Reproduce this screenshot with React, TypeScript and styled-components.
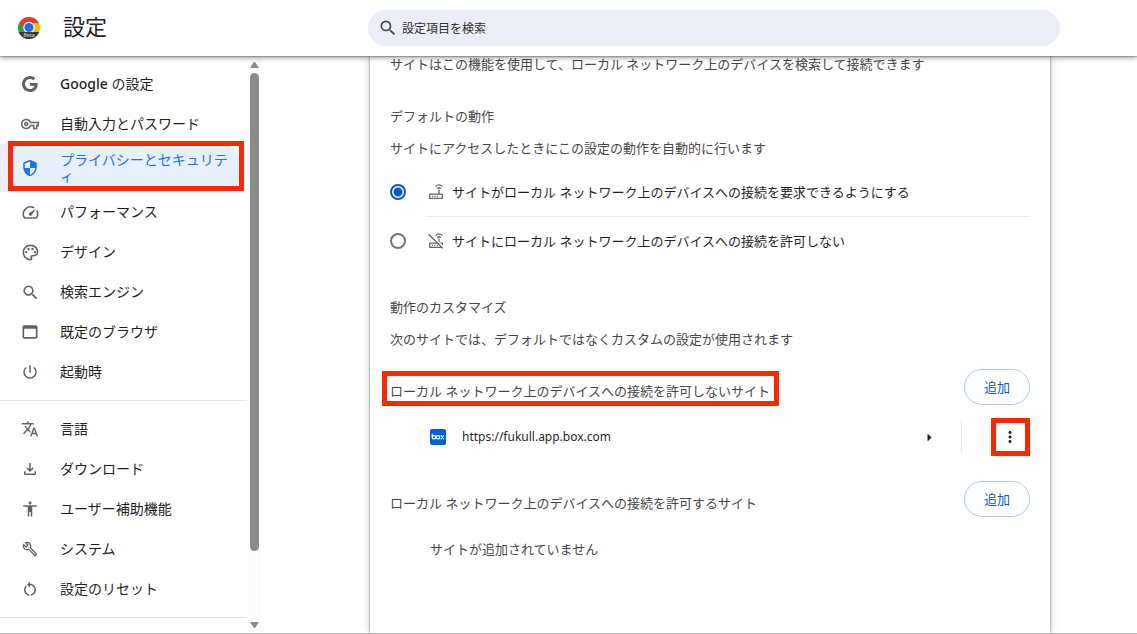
import React from 'react';
import styled, { createGlobalStyle } from 'styled-components';
import {
  MdAccessibility,
  MdMoreVert,
  MdOutlineBuild,
  MdOutlineFileDownload,
  MdOutlinePalette,
  MdOutlineVpnKey,
  MdPowerSettingsNew,
  MdRestartAlt,
  MdSearch,
  MdSecurity,
  MdSpeed,
  MdTranslate,
  MdWebAsset,
} from 'react-icons/md';

const GlobalStyle = createGlobalStyle`
  *, *::before, *::after { box-sizing: border-box; }
  body {
    margin: 0;
    background: #fff;
    color: #1f1f1f;
    font-family: "Noto Sans", "Noto Sans CJK JP", sans-serif;
    font-size: 13px;
    line-height: 20px;
  }
  button, input { font: inherit; }
`;

const Page = styled.div`
  display: flex;
  flex-direction: column;
  height: 100vh;
  overflow: hidden;
  border-bottom: 1px solid #b0b0b0;
`;

const Toolbar = styled.header`
  position: relative;
  z-index: 2;
  flex: none;
  display: flex;
  align-items: center;
  height: 56px;
  background: #fff;
  box-shadow: 0 1px 1px rgba(0, 0, 0, 0.2), 0 2px 5px rgba(0, 0, 0, 0.36);
`;

const Brand = styled.div`
  flex: none;
  display: flex;
  align-items: center;
  gap: 22px;
  width: 291px;
  padding-left: 17px;
`;

const Title = styled.h1`
  margin: 0;
  padding-bottom: 4px;
  font-size: 22px;
  line-height: 28px;
  font-weight: 400;
`;

const SearchArea = styled.div`
  flex: 1;
  display: flex;
  justify-content: center;
`;

const SearchBox = styled.label`
  display: flex;
  align-items: center;
  gap: 4px;
  width: 100%;
  max-width: 692px;
  height: 36px;
  padding: 0 10px;
  border-radius: 18px;
  background: #ebeef8;
  color: #474747;
`;

const SearchInput = styled.input`
  flex: 1;
  min-width: 0;
  padding: 2px 0 0;
  border: 0;
  outline: 0;
  background: transparent;
  font-size: 12px;
  &::placeholder { color: #303030; opacity: 1; }
`;

const Body = styled.div`
  flex: 1;
  min-height: 0;
  display: flex;
`;

const Sidebar = styled.aside`
  flex: none;
  display: flex;
  width: 283px;
`;

const Nav = styled.nav`
  width: 247px;
  padding-top: 8px;
`;

const NavLink = styled.a<{ $active?: boolean }>`
  position: relative;
  display: flex;
  align-items: center;
  gap: 20px;
  min-height: 40px;
  margin-right: 4px;
  padding: 8px 14px 8px 20px;
  border-radius: 0 24px 24px 0;
  background: ${(p) => (p.$active ? '#e8f0fe' : 'transparent')};
  color: ${(p) => (p.$active ? '#1a73e8' : '#1f1f1f')};
  font-size: 14px;
  line-height: 16px;
  font-weight: 400;
  text-decoration: none;
`;

const NavIcon = styled.span<{ $active?: boolean }>`
  flex: none;
  display: flex;
  justify-content: center;
  width: 20px;
  color: ${(p) => (p.$active ? '#1a73e8' : '#5f6368')};
`;

const Brandname = styled.span`
  font-weight: 500;
`;

const Divider = styled.hr`
  height: 1px;
  margin: 8px 0;
  border: 0;
  background: #e4e4e4;
`;

const ScrollTrack = styled.div`
  display: flex;
  flex-direction: column;
  align-items: center;
  justify-content: space-between;
  width: 15px;
  padding: 4px 0 3px;
  background: #fcfcfc;
`;

const ScrollThumb = styled.div`
  flex: 1;
  display: flex;
  padding: 4px 0 70px;
  &::before {
    content: '';
    width: 9px;
    border-radius: 5px;
    background: #8b8b8b;
  }
`;

const Main = styled.main`
  flex: 1;
  min-width: 0;
  display: flex;
  justify-content: center;
`;

const Card = styled.section`
  width: 100%;
  max-width: 680px;
  padding: 0 20px;
  background: #fff;
  box-shadow: 0 0 2px rgba(0, 0, 0, 0.5), 0 0 8px rgba(0, 0, 0, 0.22);
`;

const Intro = styled.p`
  margin: 0 0 34px;
  line-height: 16px;
  color: #474747;
`;

const SectionTitle = styled.h2`
  margin: 0 0 12px;
  font-size: 13px;
  font-weight: 400;
  color: #474747;
`;

const SectionText = styled.p`
  margin: 0;
  color: #474747;
`;

const Choices = styled.div`
  margin: 10px 0 32px;
`;

const Choice = styled.label`
  display: flex;
  align-items: center;
  height: 48px;
`;

const ChoiceDivider = styled.hr`
  height: 1px;
  margin: 0 0 0 36px;
  border: 0;
  background: #ececec;
`;

const Radio = styled.input`
  appearance: none;
  flex: none;
  width: 16px;
  height: 16px;
  margin: 0;
  border: 2px solid #757575;
  border-radius: 50%;
  &:checked {
    border-color: #0b57d0;
    background: radial-gradient(circle, #0b57d0 4px, transparent 5px);
  }
`;

const ChoiceBody = styled.span`
  flex: 1;
  display: flex;
  align-items: center;
  gap: 8px;
  margin-left: 22px;
  svg { color: #5f6368; }
`;

const ListHeader = styled.div`
  display: flex;
  align-items: flex-end;
  justify-content: space-between;
  margin-top: 20px;
`;

const ListTitle = styled.h3`
  position: relative;
  margin: 0 0 4px;
  font-size: 13px;
  font-weight: 400;
  color: #474747;
`;

const AddButton = styled.button`
  width: 66px;
  height: 36px;
  padding: 0;
  border: 1px solid #a8c7fa;
  border-radius: 18px;
  background: #fff;
  color: #0b57d0;
`;

const SiteRow = styled.div`
  display: flex;
  align-items: center;
  height: 48px;
  margin-top: 8px;
  padding: 0 2px 0 40px;
`;

const SiteName = styled.span`
  flex: 1;
  margin-left: 16px;
  font-size: 12px;
`;

const IconButton = styled.button`
  position: relative;
  display: flex;
  align-items: center;
  justify-content: center;
  width: 36px;
  height: 36px;
  padding: 0;
  border: 0;
  background: transparent;
  color: #1f1f1f;
`;

const Separator = styled.span`
  width: 1px;
  height: 32px;
  margin: 0 30px 0 14px;
  background: #e4e4e4;
`;

const EmptyList = styled.p`
  margin: 8px 0 0;
  padding-left: 40px;
  line-height: 48px;
  color: #474747;
`;

const Highlight = styled.span<{ $inset: string }>`
  position: absolute;
  z-index: 1;
  inset: ${(p) => p.$inset};
  border: 5px solid #ff2600;
  pointer-events: none;
`;

const ChromeLogo = () => (
  <svg width="24" height="24" viewBox="0 0 24 24" aria-hidden="true">
    <defs>
      <clipPath id="disc"><circle cx="12" cy="12" r="11" /></clipPath>
    </defs>
    <g clipPath="url(#disc)">
      <rect width="24" height="24" fill="#fbbc04" />
      <path d="M0 0h24v7H12L7.500 14.500 1 5z" fill="#e33b2e" />
      <path d="M2.300 6.200 7.600 14.600 12 17v7H0V6z" fill="#2da04a" />
      <circle cx="12" cy="11.500" r="5.700" fill="#fff" />
      <circle cx="12" cy="11.500" r="4.600" fill="#1a73e8" />
      <rect y="16" width="24" height="8" fill="#35363a" />
    </g>
    <text x="12" y="21" textAnchor="middle" fontSize="5" fontWeight="600" fill="#c8c8c8">Beta</text>
  </svg>
);

const GoogleG = () => (
  <svg width="18" height="18" viewBox="0 0 18 18" fill="currentColor" aria-hidden="true">
    <path d="M16.58 8H9v2.75h4.47c-.24 1.200-1.420 3.270-4.470 3.270-2.720 0-4.930-2.250-4.930-5.020S6.280 3.980 9 3.980c1.540 0 2.570.66 3.170 1.220l2.190-2.120C12.970 1.790 11.160 1 9 1 4.580 1 1 4.580 1 9s3.580 8 8 8c4.620 0 7.680-3.250 7.680-7.820 0-.46-.04-.83-.1-1.180z" />
  </svg>
);

const Router = ({ off = false }: { off?: boolean }) => (
  <svg width="16" height="16" viewBox="0 0 16 16" fill="none" stroke="currentColor" strokeWidth="1.300" aria-hidden="true">
    <rect x="1.650" y="10.150" width="12.700" height="4.200" rx="0.600" />
    <path d="M11 5.500V10M7.600 2.600Q11-.8 14.400 2.600M9.200 4.500Q11 3 12.800 4.500" />
    <path d="M3.800 12.300h1.300M6.300 12.300h1.300M8.800 12.300h1.300" />
    {off && (
      <>
        <path d="M1.500.2 15.800 14.500" stroke="#fff" strokeWidth="1.400" />
        <path d="M.6 1.200 14.800 15.400" />
      </>
    )}
  </svg>
);

const BoxFavicon = () => (
  <svg width="16" height="16" viewBox="0 0 16 16" aria-hidden="true">
    <rect width="16" height="16" rx="2" fill="#0061d5" />
    <g fill="none" stroke="#fff" strokeWidth="1.100" strokeLinecap="round">
      <path d="M2.200 5v3.500" />
      <circle cx="4" cy="8.300" r="1.700" />
      <circle cx="8" cy="8.300" r="1.700" />
      <path d="m11 6.700 2.700 3.300M13.700 6.700 11 10" />
    </g>
  </svg>
);

const Triangle = ({ d }: { d: string }) => (
  <svg width="9" height="9" viewBox="0 0 9 9" aria-hidden="true">
    <path d={d} fill="currentColor" stroke="currentColor" strokeLinejoin="round" />
  </svg>
);

const ScrollArrow = styled.span`
  display: flex;
  color: #8b8b8b;
`;

interface Entry {
  label: React.ReactNode;
  icon: React.ReactNode;
  active?: boolean;
}

const primary: Entry[] = [
  { label: <><Brandname>Google</Brandname> の設定</>, icon: <GoogleG /> },
  { label: '自動入力とパスワード', icon: <MdOutlineVpnKey size={18} /> },
  { label: 'プライバシーとセキュリティ', icon: <MdSecurity size={18} />, active: true },
  { label: 'パフォーマンス', icon: <MdSpeed size={19} /> },
  { label: 'デザイン', icon: <MdOutlinePalette size={19} /> },
  { label: '検索エンジン', icon: <MdSearch size={19} /> },
  { label: '既定のブラウザ', icon: <MdWebAsset size={20} /> },
  { label: '起動時', icon: <MdPowerSettingsNew size={18} /> },
];

const secondary: Entry[] = [
  { label: '言語', icon: <MdTranslate size={18} /> },
  { label: 'ダウンロード', icon: <MdOutlineFileDownload size={18} /> },
  { label: 'ユーザー補助機能', icon: <MdAccessibility size={18} /> },
  { label: 'システム', icon: <MdOutlineBuild size={16} /> },
  { label: '設定のリセット', icon: <MdRestartAlt size={18} /> },
];

const NavItems = ({ items }: { items: Entry[] }) => (
  <>
    {items.map((item, i) => (
      <NavLink key={i} href="#" $active={item.active}>
        <NavIcon $active={item.active}>{item.icon}</NavIcon>
        <span>{item.label}</span>
        {item.active && <Highlight $inset="-3px -1px 1px 8px" />}
      </NavLink>
    ))}
  </>
);

export default function App() {
  return (
    <>
      <GlobalStyle />
      <Page>
        <Toolbar>
          <Brand>
            <ChromeLogo />
            <Title>設定</Title>
          </Brand>
          <SearchArea>
            <SearchBox>
              <MdSearch size={20} />
              <SearchInput type="search" placeholder="設定項目を検索" aria-label="設定項目を検索" />
            </SearchBox>
          </SearchArea>
        </Toolbar>
        <Body>
          <Sidebar>
            <Nav>
              <NavItems items={primary} />
              <Divider />
              <NavItems items={secondary} />
              <Divider />
            </Nav>
            <ScrollTrack>
              <ScrollArrow><Triangle d="M4.500 2 8.300 7.500H.7z" /></ScrollArrow>
              <ScrollThumb />
              <ScrollArrow><Triangle d="M4.500 7 8.300 1.500H.7z" /></ScrollArrow>
            </ScrollTrack>
          </Sidebar>
          <Main>
            <Card>
              <Intro>サイトはこの機能を使用して、ローカル ネットワーク上のデバイスを検索して接続できます</Intro>

              <SectionTitle>デフォルトの動作</SectionTitle>
              <SectionText>サイトにアクセスしたときにこの設定の動作を自動的に行います</SectionText>
              <Choices>
                <Choice>
                  <Radio type="radio" name="access" defaultChecked />
                  <ChoiceBody>
                    <Router />
                    サイトがローカル ネットワーク上のデバイスへの接続を要求できるようにする
                  </ChoiceBody>
                </Choice>
                <ChoiceDivider />
                <Choice>
                  <Radio type="radio" name="access" />
                  <ChoiceBody>
                    <Router off />
                    サイトにローカル ネットワーク上のデバイスへの接続を許可しない
                  </ChoiceBody>
                </Choice>
              </Choices>

              <SectionTitle>動作のカスタマイズ</SectionTitle>
              <SectionText>次のサイトでは、デフォルトではなくカスタムの設定が使用されます</SectionText>

              <ListHeader>
                <ListTitle>
                  ローカル ネットワーク上のデバイスへの接続を許可しないサイト
                  <Highlight $inset="-10px -9px -5px -8px" />
                </ListTitle>
                <AddButton type="button">追加</AddButton>
              </ListHeader>
              <SiteRow>
                <BoxFavicon />
                <SiteName>https://fukull.app.box.com</SiteName>
                <IconButton type="button" aria-label="詳細">
                  <Triangle d="M3 1.500v6l3-3z" />
                </IconButton>
                <Separator />
                <IconButton type="button" aria-label="その他の操作">
                  <MdMoreVert size={18} />
                  <Highlight $inset="-1px -2px -1px -1px" />
                </IconButton>
              </SiteRow>

              <ListHeader>
                <ListTitle>ローカル ネットワーク上のデバイスへの接続を許可するサイト</ListTitle>
                <AddButton type="button">追加</AddButton>
              </ListHeader>
              <EmptyList>サイトが追加されていません</EmptyList>
            </Card>
          </Main>
        </Body>
      </Page>
    </>
  );
}
